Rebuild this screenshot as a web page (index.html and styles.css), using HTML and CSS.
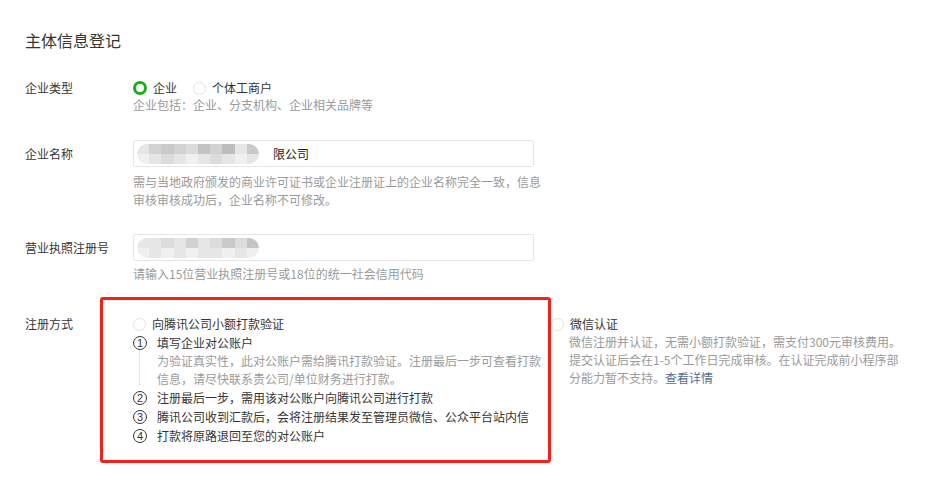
FILE: index.html
```html
<!DOCTYPE html>
<html lang="zh-CN">
<head>
<meta charset="utf-8">
<link rel="stylesheet" href="styles.css">
</head>
<body>
<div class="page">
  <h1 class="title">主体信息登记</h1>

  <div class="row row-type">
    <div class="label">企业类型</div>
    <div class="field">
      <div class="radios">
        <span class="radio checked"></span><span class="rtext">企业</span>
        <span class="radio second"></span><span class="rtext">个体工商户</span>
      </div>
      <div class="hint hint-short">企业包括：企业、分支机构、企业相关品牌等</div>
    </div>
  </div>

  <div class="row row-name">
    <div class="label label-input">企业名称</div>
    <div class="field">
      <div class="input">
        <span class="blur">
          <i class="g1"></i><i class="g3"></i><i class="g4"></i><i class="g3"></i><i class="g2"></i><i class="g5"></i><i class="g3"></i><i class="g6"></i><i class="g1"></i><i class="g4"></i>
          <i class="g0"></i><i class="g1"></i><i class="g2"></i><i class="g1"></i><i class="g0"></i><i class="g1"></i><i class="g2"></i><i class="g1"></i><i class="g0"></i><i class="g1"></i>
        </span><span class="itext">限公司</span>
      </div>
      <div class="hint hint-name">需与当地政府颁发的商业许可证书或企业注册证上的企业名称完全一致，信息审核审核成功后，企业名称不可修改。</div>
    </div>
  </div>

  <div class="row row-license">
    <div class="label label-input">营业执照注册号</div>
    <div class="field">
      <div class="input">
        <span class="blur">
          <i class="g1"></i><i class="g1"></i><i class="g2"></i><i class="g1"></i><i class="g3"></i><i class="g1"></i><i class="g2"></i><i class="g4"></i><i class="g2"></i><i class="g5"></i>
          <i class="g0"></i><i class="g1"></i><i class="g0"></i><i class="g1"></i><i class="g0"></i><i class="g1"></i><i class="g1"></i><i class="g0"></i><i class="g1"></i><i class="g0"></i>
        </span>
      </div>
      <div class="hint hint-license">请输入15位营业执照注册号或18位的统一社会信用代码</div>
    </div>
  </div>

  <div class="row row-method">
    <div class="label">注册方式</div>
    <div class="field methods">
      <div class="method method-bank">
        <div class="mhead"><span class="radio"></span><span class="rtext">向腾讯公司小额打款验证</span></div>
        <div class="steps">
          <div class="step first">
            <span class="num">1</span><span class="stext">填写企业对公账户</span>
          </div>
          <div class="step-desc">为验证真实性，此对公账户需给腾讯打款验证。注册最后一步可查看打款信息，请尽快联系贵公司/单位财务进行打款。</div>
          <div class="step"><span class="num">2</span><span class="stext">注册最后一步，需用该对公账户向腾讯公司进行打款</span></div>
          <div class="step"><span class="num">3</span><span class="stext">腾讯公司收到汇款后，会将注册结果发至管理员微信、公众平台站内信</span></div>
          <div class="step"><span class="num">4</span><span class="stext">打款将原路退回至您的对公账户</span></div>
        </div>
      </div>
      <div class="method method-wx">
        <div class="mhead"><span class="radio"></span><span class="rtext">微信认证</span></div>
        <div class="wx-desc">微信注册并认证，无需小额打款验证，需支付300元审核费用。提交认证后会在1-5个工作日完成审核。在认证完成前小程序部分能力暂不支持。<a class="link" href="#">查看详情</a></div>
      </div>
    </div>
    <div class="highlight"></div>
  </div>
</div>
</body>
</html>
```

FILE: styles.css
```css
* { box-sizing: border-box; }
html, body { margin: 0; padding: 0; background: #fff; }
body {
  font-family: "Noto Sans CJK SC", "Microsoft YaHei", sans-serif;
  color: #353535;
  font-size: 12px;
  width: 928px;
  height: 478px;
  overflow: hidden;
}
.page { padding: 28px 0 0 25px; }
.title {
  margin: 0;
  font-size: 16px;
  font-weight: normal;
  line-height: 24px;
  color: #353535;
}
.row { display: flex; position: relative; }
.label { width: 108px; flex: none; line-height: 18px; color: #353535; }
.label-input { line-height: 27px; }
.field { flex: none; }

.row-type { margin-top: 27px; }
.radios { display: flex; align-items: center; height: 18px; }
.radio {
  display: inline-block;
  width: 13px; height: 13px;
  border-radius: 50%;
  border: 1px solid #e2e2e2;
  flex: none;
}
.radio.checked { border: 3px solid #1aad19; width: 14px; height: 14px; }
.radio.second { margin-left: 16px; }
.rtext { margin-left: 6px; line-height: 18px; }
.hint { color: #9a9a9a; }
.hint-short { line-height: 16px; }

.row-name { margin-top: 27px; }
.input {
  width: 401px; height: 27px;
  border: 1px solid #e6e6e6;
  border-radius: 2px;
  display: flex; align-items: center;
  padding-left: 3px;
}
.blur {
  display: grid;
  grid-template-columns: repeat(10, 12.2px);
  grid-template-rows: 10px 10px;
  width: 122px;
  height: 20px;
  border-radius: 10px;
  overflow: hidden;
  filter: blur(0.5px);
}
.blur i { display: block; }
.blur i.g0 { background: #f0f0f0; }
.blur i.g1 { background: #e6e6e6; }
.blur i.g2 { background: #dcdcdc; }
.blur i.g3 { background: #d2d2d2; }
.blur i.g4 { background: #cacaca; }
.blur i.g5 { background: #c4c4c4; }
.blur i.g6 { background: #bdbdbd; }
.itext { margin-left: 14px; color: #222; }
.hint-name { width: 410px; line-height: 18px; margin-top: 6px; }

.row-license { margin-top: 25px; }
.hint-license { line-height: 18px; margin-top: 4px; }

.row-method { margin-top: 32px; }
.methods { display: flex; }
.method-bank { width: 418px; }
.mhead { display: flex; align-items: center; height: 18px; }
.step { display: flex; align-items: center; height: 19px; }
.num {
  width: 14px; height: 14px;
  border: 1px solid #353535;
  border-radius: 50%;
  font-size: 11px;
  line-height: 12px;
  text-align: center;
  flex: none;
  font-family: "Liberation Sans", sans-serif;
}
.stext { margin-left: 10px; }
.step-desc {
  color: #9a9a9a;
  line-height: 18px;
  padding-left: 24px;
  width: 410px;
  position: relative;
}
.step-desc::before {
  content: "";
  position: absolute;
  left: 6px; top: -2px; bottom: 2px;
  border-left: 1px solid #e3e3e3;
}
.method-wx { width: 340px; }
.wx-desc { color: #9a9a9a; line-height: 18px; padding-left: 18px; width: 350px; }
.link { color: #576b95; text-decoration: none; }

.highlight {
  position: absolute;
  left: 75px; top: -18px;
  width: 451px; height: 166px;
  border: 3px solid #f5201a;
  border-radius: 3px;
  pointer-events: none;
}
```
